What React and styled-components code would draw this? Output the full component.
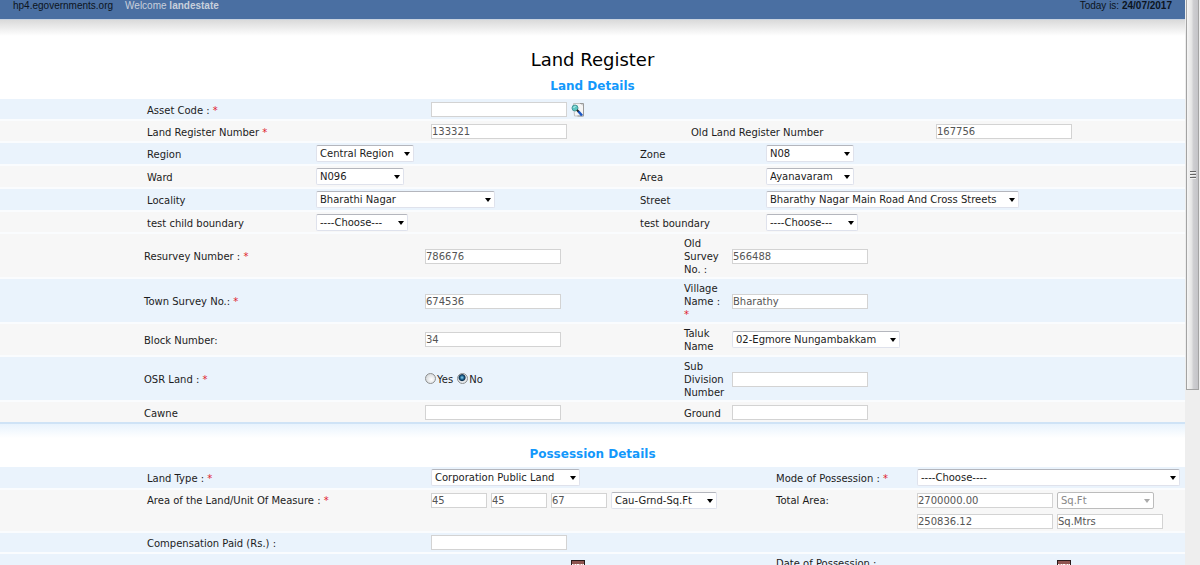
import React from "react";
import styled, { createGlobalStyle } from "styled-components";

const Global = createGlobalStyle`
  * { box-sizing: border-box; }
  body { margin: 0; background: #fff; }
  body, input, select { font-family: "DejaVu Sans", Verdana, sans-serif; font-size: 10px; }
`;

const Shell = styled.div`
  display: flex;
  height: 100vh;
  color: #1c1c1c;
`;

const Page = styled.div`
  flex: 1;
  min-width: 0;
  overflow-y: auto;
  scrollbar-width: none;
`;

const ScrollTrack = styled.div`
  width: 15px;
  flex: none;
  padding-left: 1px;
  background: #eeeeee;
`;

const ScrollThumb = styled.div`
  display: flex;
  flex-direction: column;
  align-items: center;
  justify-content: center;
  width: 13px;
  height: 69%;
  border: 1px solid #a3a3a3;
  border-top: 0;
  background: linear-gradient(90deg, #f5f5f5 0%, #e6e6e6 40%, #cdcdd0 60%, #c4c4c8 100%);
`;

const Grip = styled.div`
  display: flex;
  flex-direction: column;
  gap: 1px;
  margin-bottom: 38px;
`;

const GripLine = styled.i`
  width: 6px;
  height: 2px;
  border-top: 1px solid #666;
  border-bottom: 1px solid #f2f2f2;
`;

const TopBar = styled.header`
  display: flex;
  height: 19px;
  padding: 0 13px;
  gap: 12px;
  background: #4a6fa2;
  color: #0c1420;
  font: 10px/12px "Liberation Sans", Arial, sans-serif;
`;

const Welcome = styled.span`
  color: #c8d0dc;
`;

const Today = styled.span`
  margin-left: auto;
`;

const Shade = styled.div`
  height: ${(p) => p.$height}px;
  border-top: ${(p) => p.$line};
  background: linear-gradient(${(p) => p.$from}, #fff);
`;

const Title = styled.h1`
  margin: 12px 0 0;
  text-align: center;
  font-size: 18px;
  line-height: 24px;
  font-weight: 400;
  color: #000;
`;

const SectionTitle = styled.h2`
  margin: 0;
  padding: ${(p) => p.$top}px 0 5px;
  text-align: center;
  font-size: 12px;
  line-height: 16px;
  font-weight: 700;
  color: #1398fb;
`;

const COLUMNS = {
  register: [147, 284, 260, 245, 249],
  boundary: [147, 169, 324, 126, 419],
  survey: [144, 281, 259, 48, 453],
  possession: [147, 284, 345, 141, 268],
};

const Row = styled.div`
  display: grid;
  grid-template-columns: ${(p) => COLUMNS[p.$cols].map((n) => `minmax(0, ${n}fr)`).join(" ")};
  align-items: ${(p) => (p.$top ? "baseline" : "center")};
  padding: ${(p) => p.$pad || "2px 0"};
  border-bottom: ${(p) => (p.$last ? 0 : 2)}px solid #fafcfe;
  background: ${(p) => (p.$grey ? "#f7f7f7" : "#eaf3fc")};
  & > :first-child { grid-column-start: 2; }
`;

const Label = styled.label`
  padding: 1px 6px 0 0;
  line-height: 13px;
`;

const Star = styled.span`
  color: #e0202c;
`;

const Cell = styled.div`
  display: flex;
  flex-wrap: wrap;
  align-items: ${(p) => (p.$end ? "end" : "center")};
  gap: 5px 4px;
`;

const Field = styled.input`
  width: ${(p) => p.$w || 136}px;
  height: 15px;
  margin: 0;
  padding: 0;
  border: 1px solid #d3d3d3;
  border-radius: 0;
  background: #fff;
  color: #555;
  outline: none;
`;

const SelectBox = styled.span`
  display: inline-grid;
  grid-template: 17px / ${(p) => p.$w}px;
  align-items: center;
  & > * { grid-area: 1 / 1; }
  &::after {
    content: "";
    grid-area: 1 / 1;
    justify-self: end;
    margin-right: 4px;
    border: 3px solid transparent;
    border-top: 4px solid ${(p) => (p.$off ? "#aaa" : "#000")};
    border-bottom: 0;
    pointer-events: none;
  }
`;

const NativeSelect = styled.select`
  appearance: none;
  width: 100%;
  height: 17px;
  margin: 0;
  padding: 0 0 0 3px;
  border: 1px solid #dfe2ec;
  border-top-color: #b4b6bd;
  border-radius: 2px;
  background: #fff;
  color: #1c1c1c;
  line-height: 15px;
  &:disabled { border-color: #bcbcbc; color: #888; opacity: 1; }
`;

const Choice = styled.label`
  display: inline-flex;
  align-items: center;
  line-height: 13px;
`;

const Radio = styled.input`
  appearance: none;
  width: 11px;
  height: 11px;
  margin: 0 1px 2px 0;
  border: 1px solid #8e8f8f;
  border-radius: 50%;
  background: radial-gradient(circle at 60% 60%, #fff, #c9cdd1);
  &:checked {
    background: radial-gradient(circle at 45% 40%, #8fd8f5 0, #1b5f8c 2px, #0d2f4d 3px, #e6e9ec 4px);
  }
`;

const IconButton = styled.button`
  display: flex;
  margin: 0;
  padding: 0;
  border: 0;
  background: none;
`;

const SearchIcon = () => (
  <svg width="14" height="15" viewBox="0 0 14 15" aria-hidden="true">
    <path d="M2.500 1.500h7l3 2v10.500h-9z" fill="#f5f5f5" stroke="#c2c2c2" />
    <path d="M9 1.500h3.500v12.500h-6" fill="none" stroke="#9a9a9a" />
    <circle cx="4" cy="6" r="3" fill="#5cc5c3" stroke="#4b9a9c" />
    <path d="M2.500 6l2-2" stroke="#d4fbf7" />
    <path d="M6 8l2 2" stroke="#222" strokeWidth="2" />
    <path d="M7.500 9.500l3.500 4" stroke="#1b57c4" strokeWidth="2.500" />
  </svg>
);

const CalendarIcon = () => (
  <svg width="14" height="20" viewBox="0 0 14 20" aria-hidden="true">
    <rect x="0.500" y="0.500" width="13" height="19" fill="#fff" stroke="#2b1b1b" />
    <rect x="1" y="1" width="12" height="3" fill="#8f5450" />
    <path d="M2 4.500h2M5 4.500h1M8 4.500h2M11 4.500h1" stroke="#d9b5b2" />
    <path d="M3 7h8M3 10h8M3 13h8M3 16h8" stroke="#888" strokeDasharray="2 1" />
  </svg>
);

function Caption({ id, text, required }) {
  return (
    <Label htmlFor={id}>
      {text}
      {required && <> <Star>*</Star></>}
    </Label>
  );
}

function Select({ id, value, w, off, label }) {
  return (
    <SelectBox $w={w} $off={off}>
      <NativeSelect id={id} disabled={off} aria-label={label}>
        <option>{value}</option>
      </NativeSelect>
    </SelectBox>
  );
}

const boundaries = [
  [["Region", "Central Region", 98], ["Zone", "N08", 88]],
  [["Ward", "N096", 88], ["Area", "Ayanavaram", 88]],
  [["Locality", "Bharathi Nagar", 179], ["Street", "Bharathy Nagar Main Road And Cross Streets", 253]],
  [["test child boundary", "----Choose---", 92], ["test boundary", "----Choose---", 92]],
];

export default function App() {
  return (
    <Shell>
      <Global />
      <Page>
        <TopBar>
          <span>hp4.egovernments.org</span>
          <Welcome>Welcome <b>landestate</b></Welcome>
          <Today>Today is: <b>24/07/2017</b></Today>
        </TopBar>
        <Shade $height={17} $line="1px solid #c9d3e0" $from="#dadada" />
        <form onSubmit={(e) => e.preventDefault()}>
          <Title>Land Register</Title>
          <SectionTitle $top={6}>Land Details</SectionTitle>

          <Row $cols="register" $pad="3px 0 2px">
            <Caption id="asset" text="Asset Code :" required />
            <Cell>
              <Field id="asset" />
              <IconButton type="button" aria-label="Search asset"><SearchIcon /></IconButton>
            </Cell>
          </Row>
          <Row $cols="register" $grey $pad="3px 0 2px">
            <Caption id="reg" text="Land Register Number" required />
            <Cell><Field id="reg" defaultValue="133321" /></Cell>
            <Caption id="oldreg" text="Old Land Register Number" />
            <Cell><Field id="oldreg" defaultValue="167756" /></Cell>
          </Row>

          {boundaries.map((pair, i) => (
            <Row key={i} $cols="boundary" $grey={i % 2 === 1} $pad={i === 3 ? "2px 0 1px" : "2px 0"}>
              {pair.map(([text, value, w]) => (
                <React.Fragment key={text}>
                  <Caption id={text} text={text} />
                  <Cell><Select id={text} value={value} w={w} /></Cell>
                </React.Fragment>
              ))}
            </Row>
          ))}

          <Row $cols="survey" $grey $pad="2px 0 1px">
            <Caption id="resurvey" text="Resurvey Number :" required />
            <Cell><Field id="resurvey" defaultValue="786676" /></Cell>
            <Caption id="oldsurvey" text="Old Survey No. :" />
            <Cell><Field id="oldsurvey" defaultValue="566488" /></Cell>
          </Row>
          <Row $cols="survey" $pad="2px 0 1px">
            <Caption id="town" text="Town Survey No.:" required />
            <Cell><Field id="town" defaultValue="674536" /></Cell>
            <Caption id="village" text="Village Name :" required />
            <Cell><Field id="village" defaultValue="Bharathy" /></Cell>
          </Row>
          <Row $cols="survey" $grey>
            <Caption id="block" text="Block Number:" />
            <Cell><Field id="block" defaultValue="34" /></Cell>
            <Caption id="taluk" text="Taluk Name" />
            <Cell><Select id="taluk" value="02-Egmore Nungambakkam" w={168} /></Cell>
          </Row>
          <Row $cols="survey" $pad="2px 0 1px">
            <Label as="span" id="osr">OSR Land : <Star>*</Star></Label>
            <Cell role="radiogroup" aria-labelledby="osr">
              <Choice><Radio type="radio" name="osr" />Yes</Choice>
              <Choice><Radio type="radio" name="osr" defaultChecked />No</Choice>
            </Cell>
            <Caption id="subdiv" text="Sub Division Number" />
            <Cell><Field id="subdiv" /></Cell>
          </Row>
          <Row $cols="survey" $grey $pad="3px 0 2px" $last>
            <Caption id="cawne" text="Cawne" />
            <Cell><Field id="cawne" /></Cell>
            <Caption id="ground" text="Ground" />
            <Cell><Field id="ground" /></Cell>
          </Row>

          <Shade $height={16} $line="2px solid #cfe3f6" $from="#e8f3fd" />
          <SectionTitle $top={8}>Possession Details</SectionTitle>

          <Row $cols="possession">
            <Caption id="type" text="Land Type :" required />
            <Cell><Select id="type" value="Corporation Public Land" w={149} /></Cell>
            <Caption id="mode" text="Mode of Possession :" required />
            <Cell><Select id="mode" value="----Choose----" w={263} /></Cell>
          </Row>
          <Row $cols="possession" $grey $top>
            <Caption id="area1" text="Area of the Land/Unit Of Measure :" required />
            <Cell>
              <Field id="area1" defaultValue="45" $w={56} />
              <Field aria-label="Grounds" defaultValue="45" $w={56} />
              <Field aria-label="Square feet" defaultValue="67" $w={56} />
              <Select label="Unit of measure" value="Cau-Grnd-Sq.Ft" w={106} />
            </Cell>
            <Caption id="total" text="Total Area:" />
            <Cell>
              <Field id="total" defaultValue="2700000.00" />
              <Select label="Total area unit" value="Sq.Ft" w={97} off />
              <Field aria-label="Total area in square metres" defaultValue="250836.12" />
              <Field aria-label="Metric unit" defaultValue="Sq.Mtrs" $w={106} />
            </Cell>
          </Row>
          <Row $cols="possession">
            <Caption id="comp" text="Compensation Paid (Rs.) :" />
            <Cell><Field id="comp" /></Cell>
          </Row>
          <Row $cols="possession">
            <span />
            <Cell $end>
              <Field aria-label="Date" />
              <IconButton type="button" aria-label="Pick date"><CalendarIcon /></IconButton>
            </Cell>
            <Label htmlFor="possdate">Date of Possession :<br />&nbsp;</Label>
            <Cell $end>
              <Field id="possdate" />
              <IconButton type="button" aria-label="Pick possession date"><CalendarIcon /></IconButton>
            </Cell>
          </Row>
        </form>
      </Page>
      <ScrollTrack aria-hidden="true">
        <ScrollThumb>
          <Grip><GripLine /><GripLine /><GripLine /></Grip>
        </ScrollThumb>
      </ScrollTrack>
    </Shell>
  );
}
